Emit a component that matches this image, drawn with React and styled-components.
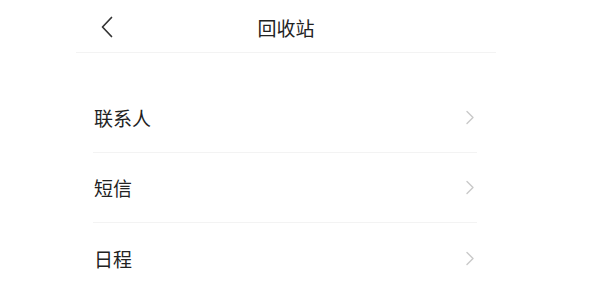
import React from 'react';
import styled, { createGlobalStyle } from 'styled-components';

const GlobalStyle = createGlobalStyle`
  body {
    margin: 0;
    background: #fff;
    font-family: "Noto Sans CJK SC", "Noto Sans", sans-serif;
    color: #222;
  }
`;

const Page = styled.div`
  width: 420px;
  margin-left: 76px;
`;

const Header = styled.header`
  position: relative;
  height: 52px;
  display: flex;
  align-items: center;
  justify-content: center;
  border-bottom: 1px solid #f3f3f3;
`;

const BackButton = styled.button`
  position: absolute;
  left: 20px;
  top: 15px;
  width: 22px;
  height: 24px;
  padding: 0;
  border: 0;
  background: none;
  display: flex;
  align-items: center;
  justify-content: center;
`;

const Title = styled.h1`
  margin: 0;
  font-size: 19px;
  font-weight: 400;
  color: #222;
  line-height: 1;
  padding-top: 3px;
`;

const List = styled.ul`
  list-style: none;
  margin: 30px 19px 0 17px;
  padding: 0;
`;

const Row = styled.li`
  height: 70px;
  display: flex;
  align-items: center;
  justify-content: space-between;
  padding-right: 2px;
  border-bottom: ${(p) => (p.$last ? 'none' : '1px solid #f3f3f3')};
  box-sizing: border-box;
`;

const Label = styled.span`
  font-size: 19px;
  color: #222;
  line-height: 1;
  padding-left: 1px;
`;

const Chevron = ({ color = '#c9c9c9', w = 10, h = 15, sw = 1.4 }) => (
  <svg width={w} height={h} viewBox="0 0 10 15" fill="none">
    <path d="M2 1.5 L8 7.5 L2 13.5" stroke={color} strokeWidth={sw} strokeLinecap="round" strokeLinejoin="round" />
  </svg>
);

const BackIcon = () => (
  <svg width="14" height="22" viewBox="0 0 14 22" fill="none">
    <path d="M11.5 1.5 L2.5 11 L11.5 20.5" stroke="#333" strokeWidth="1.7" strokeLinecap="round" strokeLinejoin="round" />
  </svg>
);

const items = ['联系人', '短信', '日程'];

export default function App() {
  return (
    <Page>
      <GlobalStyle />
      <Header>
        <BackButton aria-label="返回">
          <BackIcon />
        </BackButton>
        <Title>回收站</Title>
      </Header>
      <List>
        {items.map((item, i) => (
          <Row key={item} $last={i === items.length - 1}>
            <Label>{item}</Label>
            <Chevron />
          </Row>
        ))}
      </List>
    </Page>
  );
}
